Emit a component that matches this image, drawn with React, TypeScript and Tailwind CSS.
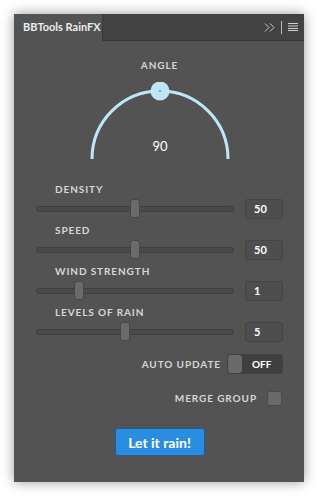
import React from "react";

const sliders = [
  { label: "DENSITY", value: 50, min: 0, max: 100 },
  { label: "SPEED", value: 50, min: 0, max: 100 },
  { label: "WIND STRENGTH", value: 1, min: 0, max: 5 },
  { label: "LEVELS OF RAIN", value: 5, min: 1, max: 10 },
];

const Slider = ({ label, value, min, max }: { label: string; value: number; min: number; max: number }) => {
  const pos = ((value - min) / (max - min)) * 188;
  return (
    <div className="mt-[5px] first:mt-0">
      <div className="ml-[19px] h-[12px] mb-[4px] text-[10px] leading-[12px] font-bold tracking-[0.09em] text-[#d6d6d6]">
        {label}
      </div>
      <div className="flex items-center h-[20px]">
        {/* track */}
        <div className="relative w-[198px] h-[6px] rounded-full bg-[#4a4a4a] border border-[#3f3f3f]">
          <div
            className="absolute top-[-8px] w-[10px] h-[19px] rounded-[3px] bg-[#6a6a6a] border border-[#464646]"
            style={{ left: pos - 1 }}
          />
        </div>
        <div className="ml-[11px] w-[38px] h-[20px] rounded-[3px] border border-[#444] bg-[#4e4e4e] flex items-center pl-[8px] text-[11px] font-bold text-white">
          {value}
        </div>
      </div>
    </div>
  );
};

export default function App() {
  return (
    <div className="w-[318px] h-[496px] bg-white pt-[14px] pl-[14px]" style={{ fontFamily: "Lato, 'Open Sans', sans-serif" }}>
      <div className="w-[290px] h-[468px] bg-[#535353] flex flex-col shadow-[0_0_12px_rgba(0,0,0,0.4)]">
        {/* header */}
        <div className="h-[27px] flex">
          <div className="w-[89px] bg-[#535353] border-r border-[#3a3a3a] flex items-center pl-[9px] text-[11px] font-bold text-[#ececec]">
            BBTools RainFX
          </div>
          <div className="flex-1 bg-[#424242] border-b border-[#393939] flex items-center justify-end pr-[6px] gap-[6px] text-[#c8c8c8]">
            <svg width="11" height="9" viewBox="0 0 11 9" fill="none" stroke="#cfcfcf" strokeWidth="1">
              <path d="M1 0.5 L5 4.5 L1 8.5 M6 0.5 L10 4.5 L6 8.5" />
            </svg>
            <div className="w-px h-[13px] bg-[#bdbdbd]" />
            <svg width="10" height="8" viewBox="0 0 10 8" fill="#cfcfcf">
              <rect x="0" y="0" width="10" height="1" />
              <rect x="0" y="2.5" width="10" height="1" />
              <rect x="0" y="5" width="10" height="1" />
              <rect x="0" y="7" width="10" height="1" />
            </svg>
          </div>
        </div>

        {/* body */}
        <div className="flex flex-col pl-[22px] pr-[21px]">
          <div className="mt-[18px] h-[12px] text-center text-[10px] leading-[12px] font-bold tracking-[0.09em] text-[#d6d6d6]">
            ANGLE
          </div>
          <div className="mt-[11px] flex justify-center">
            <svg width="160" height="80" viewBox="0 0 160 80">
              <path d="M12 77 A68 68 0 0 1 148 77" fill="none" stroke="#bfe6f6" strokeWidth="3" />
              <circle cx="80" cy="9" r="9.5" fill="#bfe6f6" />
              <circle cx="80" cy="9" r="1" fill="#2a9fe0" />
              <text x="80" y="69" textAnchor="middle" fill="#ffffff" fontSize="13" fontFamily="Lato, sans-serif">
                90
              </text>
            </svg>
          </div>

          <div className="mt-[21px] flex flex-col">
            {sliders.map((s) => (
              <Slider key={s.label} {...s} />
            ))}
          </div>

          <div className="mt-[12px] flex items-center justify-end h-[20px]">
            <span className="text-[10px] font-bold tracking-[0.09em] text-[#d6d6d6] mr-[6px]">AUTO UPDATE</span>
            <div className="w-[56px] h-[20px] rounded-[4px] bg-[#404040] flex items-center px-[1px]">
              <div className="w-[14px] h-[18px] rounded-[3px] bg-[#6a6a6a]" />
              <span className="ml-[10px] text-[10px] font-bold text-white">OFF</span>
            </div>
          </div>

          <div className="mt-[14px] flex items-center justify-end h-[20px] pr-[1px]">
            <span className="text-[10px] font-bold tracking-[0.09em] text-[#d6d6d6] mr-[10px]">MERGE GROUP</span>
            <div className="w-[15px] h-[15px] rounded-[3px] bg-[#6a6a6a] border border-[#4a4a4a]" />
          </div>

          <div className="mt-[20px] flex justify-center">
            <button className="w-[90px] h-[28px] rounded-[3px] bg-[#2b8de0] border border-[#1c5f9c] text-[14px] font-bold text-white">
              Let it rain!
            </button>
          </div>
        </div>
      </div>
    </div>
  );
}
